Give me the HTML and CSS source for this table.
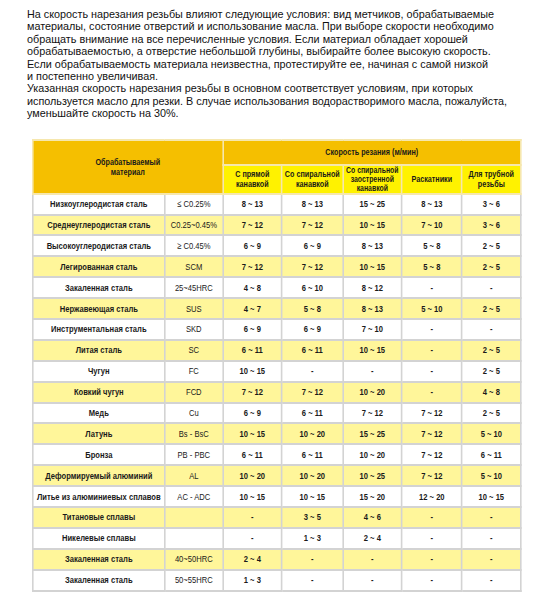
FILE: index.html
```html
<!DOCTYPE html>
<html lang="ru">
<head>
	<meta charset="UTF-8">
	<meta name="viewport" content="width=device-width, initial-scale=1.0">
	<title>Скорость нарезания резьбы</title>
	<link rel="stylesheet" href="styles.css">
</head>
<body>
	<div class="page">
		<p class="intro">
			На скорость нарезания резьбы влияют следующие условия: вид метчиков, обрабатываемые<br>
			материалы, состояние отверстий и использование масла. При выборе скорости необходимо<br>
			обращать внимание на все перечисленные условия. Если материал обладает хорошей<br>
			обрабатываемостью, а отверстие небольшой глубины, выбирайте более высокую скорость.<br>
			Если обрабатываемость материала неизвестна, протестируйте ее, начиная с самой низкой<br>
			и постепенно увеличивая.<br>
			Указанная скорость нарезания резьбы в основном соответствует условиям, при которых<br>
			используется масло для резки. В случае использования водорастворимого масла, пожалуйста,<br>
			уменьшайте скорость на 30%.
		</p>

		<!-- the table is drawn wider and squeezed, to get a narrow face -->
		<div class="table-wrap">
			<table class="speed">
				<colgroup>
					<col class="c-name">
					<col class="c-code">
					<col class="c-v1">
					<col class="c-v2">
					<col class="c-v3">
					<col class="c-v4">
					<col class="c-v5">
				</colgroup>
				<thead>
					<tr class="head-top">
						<th colspan="2" rowspan="2" class="orange">Обрабатываемый<br>материал</th>
						<th colspan="5" class="orange">Скорость резания (м/мин)</th>
					</tr>
					<tr class="head-sub">
						<th>С прямой<br>канавкой</th>
						<th>Со спиральной<br>канавкой</th>
						<th class="tight">Со спиральной<br>заостренной<br>канавкой</th>
						<th>Раскатники</th>
						<th>Для трубной<br>резьбы</th>
					</tr>
				</thead>
				<tbody>
					<tr><td class="name">Низкоуглеродистая сталь</td><td class="code">≤ C0.25%</td><td>8 ~ 13</td><td>8 ~ 13</td><td>15 ~ 25</td><td>8 ~ 13</td><td>3 ~ 6</td></tr>
					<tr class="alt"><td class="name">Среднеуглеродистая сталь</td><td class="code">C0.25~0.45%</td><td>7 ~ 12</td><td>7 ~ 12</td><td>10 ~ 15</td><td>7 ~ 10</td><td>3 ~ 6</td></tr>
					<tr><td class="name">Высокоуглеродистая сталь</td><td class="code">≥ C0.45%</td><td>6 ~ 9</td><td>6 ~ 9</td><td>8 ~ 13</td><td>5 ~ 8</td><td>2 ~ 5</td></tr>
					<tr class="alt"><td class="name">Легированная сталь</td><td class="code">SCM</td><td>7 ~ 12</td><td>7 ~ 12</td><td>10 ~ 15</td><td>5 ~ 8</td><td>2 ~ 5</td></tr>
					<tr><td class="name">Закаленная сталь</td><td class="code">25~45HRC</td><td>4 ~ 8</td><td>6 ~ 10</td><td>8 ~ 12</td><td>-</td><td>-</td></tr>
					<tr class="alt"><td class="name">Нержавеющая сталь</td><td class="code">SUS</td><td>4 ~ 7</td><td>5 ~ 8</td><td>8 ~ 13</td><td>5 ~ 10</td><td>2 ~ 5</td></tr>
					<tr><td class="name">Инструментальная сталь</td><td class="code">SKD</td><td>6 ~ 9</td><td>6 ~ 9</td><td>7 ~ 10</td><td>-</td><td>-</td></tr>
					<tr class="alt"><td class="name">Литая сталь</td><td class="code">SC</td><td>6 ~ 11</td><td>6 ~ 11</td><td>10 ~ 15</td><td>-</td><td>2 ~ 5</td></tr>
					<tr><td class="name">Чугун</td><td class="code">FC</td><td>10 ~ 15</td><td>-</td><td>-</td><td>-</td><td>2 ~ 5</td></tr>
					<tr class="alt"><td class="name">Ковкий чугун</td><td class="code">FCD</td><td>7 ~ 12</td><td>7 ~ 12</td><td>10 ~ 20</td><td>-</td><td>4 ~ 8</td></tr>
					<tr><td class="name">Медь</td><td class="code">Cu</td><td>6 ~ 9</td><td>6 ~ 11</td><td>7 ~ 12</td><td>7 ~ 12</td><td>2 ~ 5</td></tr>
					<tr class="alt"><td class="name">Латунь</td><td class="code">Bs - BsC</td><td>10 ~ 15</td><td>10 ~ 20</td><td>15 ~ 25</td><td>7 ~ 12</td><td>5 ~ 10</td></tr>
					<tr><td class="name">Бронза</td><td class="code">PB - PBC</td><td>6 ~ 11</td><td>6 ~ 11</td><td>10 ~ 20</td><td>7 ~ 12</td><td>6 ~ 11</td></tr>
					<tr class="alt"><td class="name">Деформируемый алюминий</td><td class="code">AL</td><td>10 ~ 20</td><td>10 ~ 20</td><td>10 ~ 25</td><td>7 ~ 12</td><td>5 ~ 10</td></tr>
					<tr><td class="name">Литье из алюминиевых сплавов</td><td class="code">AC - ADC</td><td>10 ~ 15</td><td>10 ~ 15</td><td>15 ~ 20</td><td>12 ~ 20</td><td>10 ~ 15</td></tr>
					<tr class="alt"><td class="name">Титановые сплавы</td><td class="code"></td><td>-</td><td>3 ~ 5</td><td>4 ~ 6</td><td>-</td><td>-</td></tr>
					<tr><td class="name">Никелевые сплавы</td><td class="code"></td><td>-</td><td>1 ~ 3</td><td>2 ~ 4</td><td>-</td><td>-</td></tr>
					<tr class="alt"><td class="name">Закаленная сталь</td><td class="code">40~50HRC</td><td>2 ~ 4</td><td>-</td><td>-</td><td>-</td><td>-</td></tr>
					<tr><td class="name">Закаленная сталь</td><td class="code">50~55HRC</td><td>1 ~ 3</td><td>-</td><td>-</td><td>-</td><td>-</td></tr>
				</tbody>
			</table>
		</div>
	</div>
</body>
</html>
```

FILE: styles.css
```css
* {
	margin: 0;
	padding: 0;
}

body {
	background-color: #fff;
	color: #111;
	font-family: "Liberation Sans", Arial, sans-serif;
}

.page {
	padding: 8px 0 0 27px;
}

.intro {
	font-size: 10.8px;
	line-height: 12.4px;
}

.table-wrap {
	margin: 19px 0 0 5px;
	width: 490px;
	overflow: hidden;
}

.speed {
	width: 610px;
	table-layout: fixed;
	border-collapse: collapse;
	transform: scaleX(0.8);
	transform-origin: 0 0;
	font-family: "Liberation Sans", Arial, sans-serif;
	font-size: 9.5px;
	text-align: center;
	color: #1a1a1a;
}

.c-name { width: 165px; }
.c-code { width: 72.5px; }
.c-v1 { width: 73.75px; }
.c-v2 { width: 76.25px; }
.c-v3 { width: 73.75px; }
.c-v4 { width: 75px; }
.c-v5 { width: 73.75px; }

.speed th {
	border-style: solid;
	border-width: 2px 2.5px;
	border-color: #f6e7ad;
	padding: 0 1px;
	font-size: 9px;
	font-weight: bold;
	line-height: 10px;
	background-color: #fff200;
}

.speed th.orange {
	background-color: #f5bf00;
}

.head-top {
	height: 25px;
}

.head-sub {
	height: 29px;
}

.speed th.tight {
	font-size: 8.6px;
	line-height: 8.8px;
}

.speed td {
	border-style: solid;
	border-width: 2px 2.5px;
	border-color: #d3d3d3;
	height: 18.9px;
	line-height: 10px;
	white-space: nowrap;
	font-weight: bold;
	background-color: #fff;
}

.speed .alt td {
	background-color: #fff69a;
}

.speed td.code {
	font-weight: normal;
}
```
